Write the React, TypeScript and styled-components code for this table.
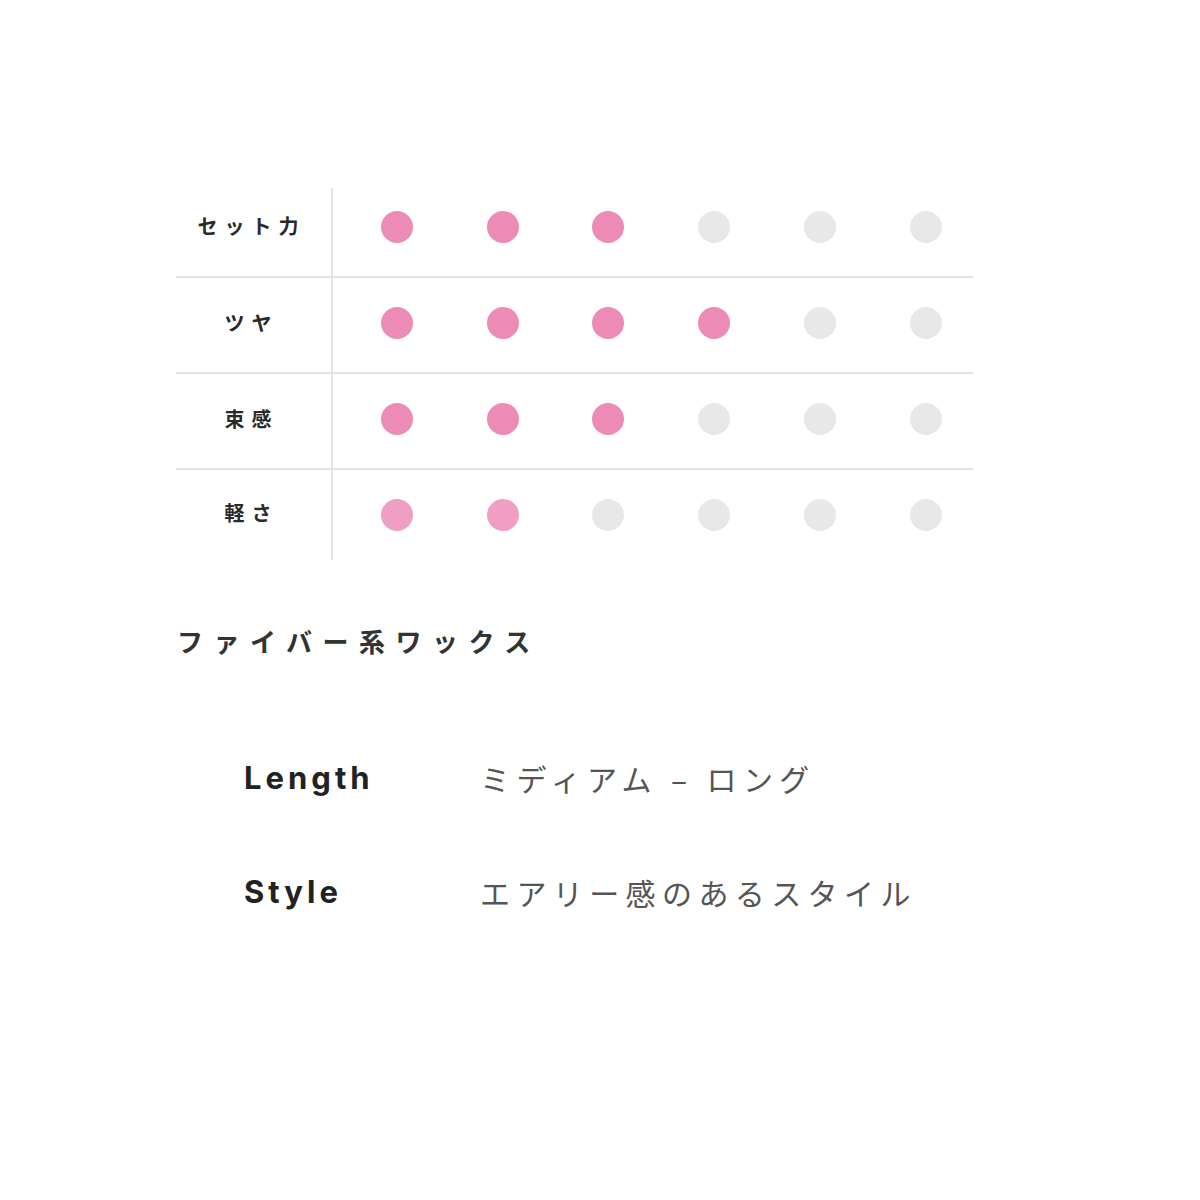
import React from 'react';
import styled, { createGlobalStyle } from 'styled-components';

const GlobalStyle = createGlobalStyle`
  html, body {
    margin: 0;
    padding: 0;
    background: #ffffff;
  }
`;

const Page = styled.div`
  width: 1200px;
  min-height: 1200px;
  padding: 182px 0 0 176px;
  box-sizing: border-box;
  font-family: 'Noto Sans CJK JP', sans-serif;
`;

const Table = styled.div`
  width: 797px;
  display: flex;
  flex-direction: column;
`;

const Row = styled.div<{ $last?: boolean }>`
  display: flex;
  height: 94px;
  border-bottom: ${(p) => (p.$last ? 'none' : '2px solid #e4e4e4')};
`;

const Label = styled.div<{ $first?: boolean; $last?: boolean }>`
  width: 157px;
  flex: none;
  display: flex;
  align-items: center;
  justify-content: center;
  padding-right: 4px;
  padding-bottom: ${(p) => (p.$first ? '14px' : '6px')};
  box-sizing: border-box;
  font-family: 'Noto Sans CJK JP', serif;
  font-weight: 700;
  font-size: 20px;
  letter-spacing: 7px;
  color: #2a2a2a;
  border-right: 2px solid #e4e4e4;
  margin-top: ${(p) => (p.$first ? '6px' : '0')};
  margin-bottom: ${(p) => (p.$last ? '4px' : '0')};
`;

const Dots = styled.div`
  display: grid;
  grid-template-columns: repeat(6, 105.8px);
  align-items: center;
  justify-items: center;
  padding-left: 11px;
  padding-bottom: 4px;
`;

const Dot = styled.span<{ $on: boolean; $light?: boolean }>`
  width: 32px;
  height: 32px;
  border-radius: 50%;
  background: ${(p) => (p.$on ? (p.$light ? '#f09ec3' : '#ec8cb6') : '#e8e8e8')};
`;

const Title = styled.h2`
  margin: 59px 0 0 1px;
  font-family: 'Noto Sans CJK JP', serif;
  font-weight: 700;
  font-size: 26px;
  letter-spacing: 10.5px;
  color: #333333;
  line-height: 36px;
`;

const Specs = styled.dl`
  margin: 101px 0 0 68px;
  display: grid;
  grid-template-columns: 236px auto;
  row-gap: 78px;
  align-items: center;
`;

const SpecName = styled.dt`
  font-family: 'Inter', 'Noto Sans', sans-serif;
  font-weight: 700;
  font-size: 31px;
  letter-spacing: 4px;
  color: #222222;
  line-height: 36px;
`;

const SpecValue = styled.dd`
  margin: 0;
  font-family: 'Noto Sans CJK JP', sans-serif;
  font-weight: 400;
  font-size: 30px;
  letter-spacing: 6.4px;
  color: #555555;
  line-height: 36px;
`;

const ratings = [
  { label: 'セット力', value: 3 },
  { label: 'ツヤ', value: 4 },
  { label: '束感', value: 3 },
  { label: '軽さ', value: 2, light: true },
];

export default function App() {
  return (
    <Page>
      <GlobalStyle />
      <Table>
        {ratings.map((r, i) => (
          <Row key={r.label} $last={i === ratings.length - 1}>
            <Label $first={i === 0} $last={i === ratings.length - 1}>
              {r.label}
            </Label>
            <Dots>
              {Array.from({ length: 6 }).map((_, j) => (
                <Dot key={j} $on={j < r.value} $light={r.light} />
              ))}
            </Dots>
          </Row>
        ))}
      </Table>
      <Title>ファイバー系ワックス</Title>
      <Specs>
        <SpecName>Length</SpecName>
        <SpecValue>ミディアム – ロング</SpecValue>
        <SpecName>Style</SpecName>
        <SpecValue>エアリー感のあるスタイル</SpecValue>
      </Specs>
    </Page>
  );
}
